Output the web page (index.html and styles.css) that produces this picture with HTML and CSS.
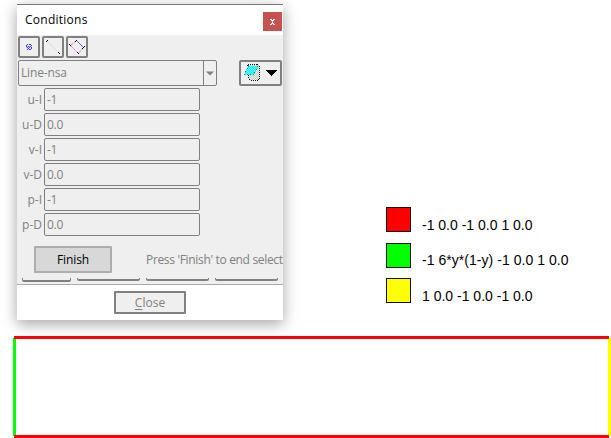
FILE: index.html
```html
<!DOCTYPE html>
<html lang="en">
<head>
<meta charset="utf-8">
<title>Conditions</title>
<link rel="stylesheet" href="styles.css">
</head>
<body>
<main class="workspace">
  <section class="dialog">
    <header class="titlebar"><h1><span>Conditions</span></h1><button class="close-x" aria-label="x"><svg width="19" height="19" shape-rendering="crispEdges"><path d="M7 7h2v1h1v-1h2v1h-1v1h-1v2h1v1h1v1h-2v-1h-1v1h-2v-1h1v-1h1v-2h-1v-1h-1z" fill="#fff"/></svg></button></header>
    <div class="body">
      <div class="tools">
        <button class="tool"><svg width="18" height="18" shape-rendering="crispEdges"><path d="M7 6h4v1h1v4h-1v1h-4v-1h-1v-4h1z" fill="#d8d8f8"/><path d="M7 6h1v1h-1zM9 6h2v1h-2zM6 7h1v2h-1zM8 8h1v1h-1zM10 8h1v1h-1zM11 7h1v1h-1zM7 9h1v1h-1zM9 9h1v1h-1zM11 9h1v2h-1zM8 10h1v1h-1zM7 11h1v1h-1zM9 11h2v1h-2z" fill="#4444d0"/></svg></button>
        <button class="tool"><svg width="18" height="18"><path d="M3 3L15 15" stroke="#dcdcfa"/><path d="M2 3h1v-1h1v1h-1v1h-1zM14 14h1v1h1v1h-1v-1h-1z" fill="#000"/></svg></button>
        <button class="tool"><svg width="18" height="18"><path d="M8.500 2.500L2.500 7.500L10.500 15.500L15.500 9.500" stroke="#d070ee" fill="none" stroke-dasharray="3 1"/><path d="M9 3L15 9" stroke="#8050e8"/><path d="M1 6h1v1h1v1h-1v-1h-1zM7 3h1v-1h1v1h-1v1h-1zM14 10h1v-1h1v-1h1v1h-1v1h-1v1h-1zM9 14h1v1h1v1h-1v-1h-1z" fill="#000"/></svg></button>
      </div>
      <div class="selector">
        <div class="combo"><span class="combo-text"><span>Line-nsa</span></span><span class="combo-arrow"><svg width="12" height="24"><path d="M2 10.500h8l-4 4z" fill="#808080"/></svg></span></div>
        <button class="layers"><svg width="39" height="22" shape-rendering="crispEdges">
          <defs>
            <pattern id="gray" width="2" height="2" patternUnits="userSpaceOnUse"><path d="M0 0h2v2h-2z" fill="#efefef"/><path d="M0 0h1v1h-1zM1 1h1v1h-1z" fill="#c8c8c8"/></pattern>
            <pattern id="cyan" width="2" height="2" patternUnits="userSpaceOnUse"><path d="M0 0h2v2h-2z" fill="#70f4f6"/><path d="M0 0h1v1h-1zM1 1h1v1h-1z" fill="#00eef2"/></pattern>
          </defs>
          <path d="M6.500 2.500h10l2 2v12l-1 2h-8l-2-2v-5z" fill="url(#gray)" stroke="#111" stroke-dasharray="1 1"/>
          <path d="M7 4h11l-5 9h-10z" fill="url(#cyan)"/>
          <path d="M7.500 3.500L3.500 12.500h9l5-9" fill="none" stroke="#108c98" stroke-dasharray="1 2"/>
          <path d="M25 8h11l-5.500 6z" fill="#000"/>
        </svg></button>
      </div>
      <div class="fields">
        <label><span class="name">u-I</span><span class="value">-1</span></label>
        <label><span class="name">u-D</span><span class="value">0.0</span></label>
        <label><span class="name">v-I</span><span class="value">-1</span></label>
        <label><span class="name">v-D</span><span class="value">0.0</span></label>
        <label><span class="name">p-I</span><span class="value">-1</span></label>
        <label><span class="name">p-D</span><span class="value">0.0</span></label>
      </div>
      <div class="action"><button class="finish">Finish</button><span class="hint">Press 'Finish' to end select</span></div>
      <div class="hidden-row"><i class="first"></i><i></i><i></i><i></i></div>
    </div>
    <footer class="footer"><button class="close"><u>C</u>lose</button></footer>
  </section>
  <ul class="legend">
    <li><i class="swatch red"></i><span>-1 0.0 -1 0.0 1 0.0</span></li>
    <li><i class="swatch green"></i><span class="inflow">-1 6*y*(1-y) -1 0.0 1 0.0</span></li>
    <li><i class="swatch yellow"></i><span>1 0.0 -1 0.0 -1 0.0</span></li>
  </ul>
</main>
<svg class="domain" width="611" height="102" shape-rendering="crispEdges">
  <path d="M13 2h3v98h-3z" fill="#0f0"/>
  <path d="M608 2h3v98h-3z" fill="#ff0"/>
  <path d="M14 0h595v3h-595zM14 99h595v3h-595z" fill="#f00"/>
</svg>
</body>
</html>
```
FILE: styles.css
```css
* { box-sizing: border-box; }
body { margin: 0; width: 611px; height: 438px; overflow: hidden; background: #fff; font: 12px/16px "Open Sans", "Noto Sans", sans-serif; color: #808080; }
button { margin: 0; padding: 0; font: inherit; color: inherit; }
svg { display: block; }
.workspace { display: flex; align-items: flex-start; height: 336px; padding: 4px 0 0 17px; }
.dialog { width: 266px; height: 316px; background: #fff; border-top: 1px solid #777; box-shadow: 0 4px 14px rgba(0,0,0,.36); }
.titlebar { display: flex; justify-content: space-between; height: 30px; padding: 7px 1px 0 8px; }
h1 { margin: 0; font: 12px/16px "Open Sans", sans-serif; color: #000; letter-spacing: .25px; }
.close-x { width: 19px; height: 19px; border: 0; background: #c75050; }
.body { height: 250px; background: #efefef; border-bottom: 1px solid #aaa; padding: 1px 0 0 1px; overflow: hidden; }
.tools { display: flex; gap: 2px; height: 24px; }
.tool { width: 22px; height: 22px; border: 2px solid #808080; border-radius: 2px; background: #efefef; }
.selector { display: flex; justify-content: space-between; height: 28px; padding-right: 1px; }
.combo { display: flex; width: 199px; height: 26px; border: 1px solid #808080; border-radius: 2px; }
.combo-text { flex: 1; padding: 4px 2px; letter-spacing: -.15px; }
.combo-arrow { width: 13px; border-left: 1px solid #808080; }
.layers { width: 43px; height: 26px; border: 2px solid #808080; border-radius: 2px; background: #efefef; }
.fields { display: grid; gap: 2px; }
.fields label { display: flex; height: 23px; }
.name { width: 24px; margin-right: 2px; padding-top: 4px; text-align: right; white-space: nowrap; }
.value { width: 156px; border: 1px solid #808080; border-radius: 2px; padding: 3px 2px; letter-spacing: -.3px; }
.action { display: flex; height: 27px; margin-top: 10px; padding-left: 16px; white-space: nowrap; }
.finish { flex: none; width: 78px; border: 2px solid #adadad; border-radius: 1px; background: #d8d8d8; color: #000; letter-spacing: -.1px; }
.hint { flex: none; margin-left: 34px; padding-top: 6px; letter-spacing: -.33px; }
.hidden-row { display: flex; gap: 6px; margin-top: 5px; padding-left: 4px; }
.hidden-row i { width: 63px; height: 3px; flex: none; border: 1px solid #808080; border-width: 0 1px 2px; border-radius: 0 0 2px 2px; }
.hidden-row .first { width: 49px; height: 4px; }
.footer { display: flex; justify-content: center; height: 35px; padding-top: 6px; }
.close { width: 72px; height: 23px; border: 2px solid #808080; border-radius: 1px; background: #efefef; }
.close u { text-underline-offset: 2px; }
.legend { list-style: none; margin: 203px 0 0 103px; padding: 0; color: #000; font: 14px/16px "Liberation Sans", sans-serif; }
.legend li { display: flex; height: 35.500px; white-space: nowrap; }
.swatch { width: 25px; height: 25px; margin-right: 11px; border: 1px solid #111; }
.legend span { padding-top: 10px; }
.legend .inflow { padding-top: 9px; letter-spacing: .04px; }
.red { background: #f00; }
.green { background: #0f0; }
.yellow { background: #ff0; }
```
